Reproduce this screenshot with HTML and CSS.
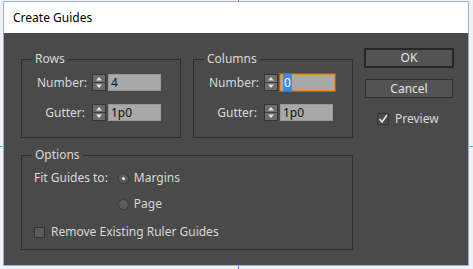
FILE: index.html
```html
<!DOCTYPE html>
<html>
<head>
<meta charset="utf-8">
<link rel="stylesheet" href="styles.css">
</head>
<body>
<div class="desk">
  <div class="guide-h"></div>
  <div class="guide-v"></div>
  <div class="dialog">
    <div class="titlebar">Create Guides</div>
    <div class="content">
      <div class="main">
        <div class="top-groups">
          <div class="group grid-group">
            <span class="legend">Rows</span>
            <div class="field-grid">
              <span class="label">Number:</span>
              <svg class="spin" width="14" height="17" viewBox="0 0 14 17"><rect x="0.5" y="0.5" width="13" height="16" fill="#6c6c6c" stroke="#363636"/><line x1="1" y1="8.5" x2="13" y2="8.5" stroke="#3e3e3e"/><path d="M4 6.5 L7 3 L10 6.5 Z" fill="#e6e6e6"/><path d="M4 10.5 L7 14 L10 10.5 Z" fill="#e6e6e6"/></svg>
              <span class="input">4</span>
              <span class="label">Gutter:</span>
              <svg class="spin" width="14" height="17" viewBox="0 0 14 17"><rect x="0.5" y="0.5" width="13" height="16" fill="#6c6c6c" stroke="#363636"/><line x1="1" y1="8.5" x2="13" y2="8.5" stroke="#3e3e3e"/><path d="M4 6.5 L7 3 L10 6.5 Z" fill="#e6e6e6"/><path d="M4 10.5 L7 14 L10 10.5 Z" fill="#e6e6e6"/></svg>
              <span class="input">1p0</span>
            </div>
          </div>
          <div class="group grid-group">
            <span class="legend">Columns</span>
            <div class="field-grid">
              <span class="label">Number:</span>
              <svg class="spin" width="14" height="17" viewBox="0 0 14 17"><rect x="0.5" y="0.5" width="13" height="16" fill="#6c6c6c" stroke="#363636"/><line x1="1" y1="8.5" x2="13" y2="8.5" stroke="#3e3e3e"/><path d="M4 6.5 L7 3 L10 6.5 Z" fill="#e6e6e6"/><path d="M4 10.5 L7 14 L10 10.5 Z" fill="#e6e6e6"/></svg>
              <span class="input focused"><span class="sel">0</span></span>
              <span class="label">Gutter:</span>
              <svg class="spin" width="14" height="17" viewBox="0 0 14 17"><rect x="0.5" y="0.5" width="13" height="16" fill="#6c6c6c" stroke="#363636"/><line x1="1" y1="8.5" x2="13" y2="8.5" stroke="#3e3e3e"/><path d="M4 6.5 L7 3 L10 6.5 Z" fill="#e6e6e6"/><path d="M4 10.5 L7 14 L10 10.5 Z" fill="#e6e6e6"/></svg>
              <span class="input">1p0</span>
            </div>
          </div>
        </div>
        <div class="group options">
          <span class="legend">Options</span>
          <div class="fit-row">
            <span class="fit-label">Fit Guides to:</span>
            <div class="radios">
              <div class="radio-item"><span class="radio on"></span><span>Margins</span></div>
              <div class="radio-item"><span class="radio"></span><span>Page</span></div>
            </div>
          </div>
          <div class="check-item remove"><span class="checkbox"></span><span>Remove Existing Ruler Guides</span></div>
        </div>
      </div>
      <div class="side">
        <div class="btn default">OK</div>
        <div class="btn">Cancel</div>
        <div class="check-item preview"><span class="checkbox checked"><svg width="10" height="10" viewBox="0 0 10 10"><path d="M1.5 5 L4 8 L9 1" fill="none" stroke="#e8e8e8" stroke-width="1.5"/></svg></span><span>Preview</span></div>
      </div>
    </div>
  </div>
</div>
</body>
</html>
```
FILE: styles.css
```css
* { box-sizing: border-box; }
html, body { margin: 0; padding: 0; }
body {
  background: #eef2f7;
  font-family: "Noto Sans", "Open Sans", sans-serif;
  font-size: 12px;
  width: 473px;
  height: 269px;
  overflow: hidden;
}
.desk {
  position: relative;
  width: 473px;
  height: 269px;
  padding: 1px 0 0 3px;
}
.guide-h {
  position: absolute;
  left: 0;
  top: 146px;
  width: 473px;
  height: 1px;
  background: #39c6d6;
}
.guide-v {
  position: absolute;
  left: 238px;
  top: 0;
  width: 1px;
  height: 269px;
  background: #7c5bc4;
}
.dialog {
  position: relative;
  width: 466px;
  height: 265px;
  border: 1px solid #9db3cf;
  display: flex;
  flex-direction: column;
}
.titlebar {
  height: 31px;
  background: #ffffff;
  color: #000;
  padding: 8px 0 0 9px;
  font-size: 12px;
  line-height: 16px;
}
.content {
  flex: 1;
  background: #4a4a4a;
  display: flex;
  padding: 15px 0 0 17px;
  gap: 11px;
  color: #d9d9d9;
}
.main {
  width: 332px;
  margin-top: 11px;
  display: flex;
  flex-direction: column;
  gap: 17px;
}
.top-groups {
  display: flex;
  gap: 12px;
}
.group {
  position: relative;
  border: 1px solid #2d2d2d;
}
.grid-group {
  width: 160px;
  height: 79px;
  padding: 14px 0 0 15px;
}
.legend {
  position: absolute;
  top: -9px;
  left: 10px;
  padding: 0 3px;
  background: #4a4a4a;
  line-height: 16px;
  color: #d9d9d9;
}
.field-grid {
  display: grid;
  grid-template-columns: 55px 14px 55px;
  row-gap: 13px;
  align-items: center;
}
.label {
  text-align: right;
  padding-right: 7px;
  line-height: 17px;
}
.spin { display: block; }
.input {
  display: block;
  margin-left: 2px;
  width: 53px;
  height: 17px;
  background: #a9a9a9;
  color: #111;
  padding: 0 2px;
  border: 1px solid #989898;
  line-height: 15px;
}
.input.focused {
  width: 55px;
  border: 1px solid #e58a2e;
  box-shadow: 0 0 0 1px #a3621f;
}
.sel {
  background: #3b8cf0;
  color: #fff;
  padding: 0 1px;
}
.options {
  height: 95px;
  padding: 14px 0 0 12px;
}
.fit-row {
  display: flex;
  gap: 10px;
}
.fit-label { line-height: 16px; }
.radios {
  display: flex;
  flex-direction: column;
  gap: 10px;
}
.radio-item {
  display: flex;
  align-items: center;
  gap: 5px;
  line-height: 16px;
}
.radio {
  width: 11px;
  height: 11px;
  border-radius: 50%;
  background: #5c5c5c;
  border: 1px solid #3a3a3a;
  position: relative;
}
.radio.on::after {
  content: "";
  position: absolute;
  left: 3px;
  top: 3px;
  width: 3px;
  height: 3px;
  border-radius: 50%;
  background: #f0f0f0;
}
.check-item {
  display: flex;
  align-items: center;
  gap: 6px;
  line-height: 16px;
}
.remove { margin-top: 12px; }
.checkbox {
  width: 11px;
  height: 11px;
  background: #5a5a5a;
  border: 1px solid #333;
  display: flex;
  align-items: center;
  justify-content: center;
}
.checkbox.checked { background: #4a4a4a; width: 12px; height: 12px; }
.side {
  width: 90px;
  display: flex;
  flex-direction: column;
  align-items: stretch;
}
.btn {
  height: 19px;
  border: 1px solid #2e2e2e;
  background: #535353;
  color: #e4e4e4;
  text-align: center;
  line-height: 17px;
}
.btn.default {
  height: 20px;
  border: 2px solid #262626;
  line-height: 16px;
}
.btn + .btn {
  margin: 11px 1px 0 1px;
}
.preview {
  margin: 13px 0 0 13px;
}
```
